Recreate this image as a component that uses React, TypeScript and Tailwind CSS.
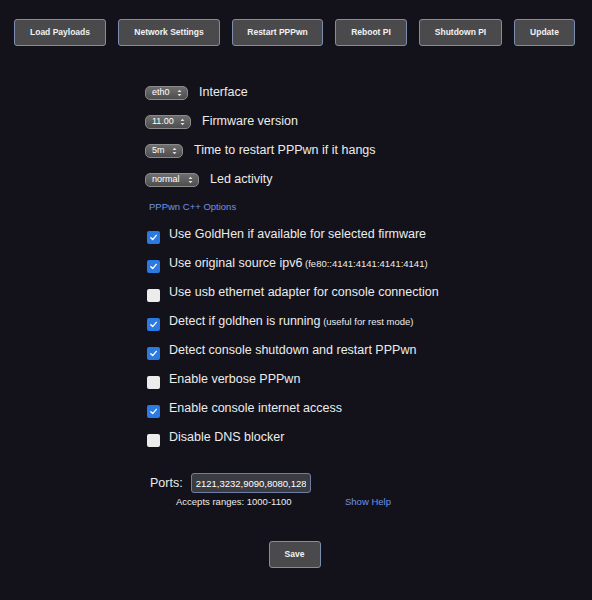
import React from "react";

const navButtons = [
  { label: "Load Payloads", w: "w-[92px]" },
  { label: "Network Settings", w: "w-[102px]" },
  { label: "Restart PPPwn", w: "w-[91px]" },
  { label: "Reboot PI", w: "w-[72px]" },
  { label: "Shutdown PI", w: "w-[83px]" },
  { label: "Update", w: "w-[61px]" },
];

function Select({ value, w }: { value: string; w: string }) {
  return (
    <div
      className={`${w} h-[14px] flex items-center justify-between rounded-[5px] border border-[#8a8a8a] bg-gradient-to-b from-[#6e6e6e] to-[#4e4e4e] pl-[6px] pr-[5px] text-[9px] leading-none text-white shrink-0`}
    >
      <span>{value}</span>
      <svg width="5" height="8" viewBox="0 0 5 8" className="shrink-0">
        <path d="M0.5 3 L2.5 0.8 L4.5 3 Z" fill="#e0e0e0" />
        <path d="M0.5 5 L2.5 7.2 L4.5 5 Z" fill="#e0e0e0" />
      </svg>
    </div>
  );
}

function Check({ checked }: { checked: boolean }) {
  return checked ? (
    <div className="w-[13px] h-[13px] rounded-[2px] bg-[#2a7ae2] flex items-center justify-center shrink-0">
      <svg width="9" height="9" viewBox="0 0 9 9">
        <path d="M1.8 4.8 L3.7 6.6 L7.3 2.4" stroke="white" strokeWidth="1.4" fill="none" strokeLinecap="round" strokeLinejoin="round" />
      </svg>
    </div>
  ) : (
    <div className="w-[13px] h-[13px] rounded-[2px] bg-[#ececec] shrink-0" />
  );
}

const selects = [
  { value: "eth0", w: "w-[43px]", label: "Interface" },
  { value: "11.00", w: "w-[46px]", label: "Firmware version" },
  { value: "5m", w: "w-[38px]", label: "Time to restart PPPwn if it hangs" },
  { value: "normal", w: "w-[54px]", label: "Led activity" },
];

const checks: { checked: boolean; label: string; note?: string }[] = [
  { checked: true, label: "Use GoldHen if available for selected firmware" },
  { checked: true, label: "Use original source ipv6", note: "(fe80::4141:4141:4141:4141)" },
  { checked: false, label: "Use usb ethernet adapter for console connection" },
  { checked: true, label: "Detect if goldhen is running", note: "(useful for rest mode)" },
  { checked: true, label: "Detect console shutdown and restart PPPwn" },
  { checked: false, label: "Enable verbose PPPwn" },
  { checked: true, label: "Enable console internet access" },
  { checked: false, label: "Disable DNS blocker" },
];

export default function App() {
  return (
    <div
      className="min-h-[600px] bg-[#13121a] text-[#ececec]"
      style={{ fontFamily: '"Liberation Sans", Arial, sans-serif' }}
    >
      <div className="flex gap-3 pl-[14px] pt-[19px]">
        {navButtons.map((b) => (
          <button
            key={b.label}
            className={`${b.w} h-[27px] rounded-[3px] border border-[#7d8db0] bg-[#4a4a4c] text-[8.5px] font-bold text-[#f2f2f2]`}
          >
            {b.label}
          </button>
        ))}
      </div>

      <div className="pl-[145px] pt-[32px] flex flex-col">
        {selects.map((s) => (
          <div key={s.label} className="h-[29px] flex items-center gap-[11px]">
            <Select value={s.value} w={s.w} />
            <span className="text-[12.5px]">{s.label}</span>
          </div>
        ))}
        <div className="h-[26px] flex items-center pl-[4px] text-[9.5px] text-[#6f93e6]">PPPwn C++ Options</div>
        <div className="flex flex-col pl-[2px] pt-[3px]">
          {checks.map((c) => (
            <div key={c.label} className="h-[29px] flex items-center gap-[9px]">
              <Check checked={c.checked} />
              <span className="text-[12.5px] pb-[7px]">
                {c.label}
                {c.note && <span className="text-[9.5px]"> {c.note}</span>}
              </span>
            </div>
          ))}
        </div>

        <div className="pt-[18px] pl-[5px] flex items-center gap-[8px] h-[38px]">
          <span className="text-[12.5px]">Ports:</span>
          <input
            readOnly
            value="2121,3232,9090,8080,12800,1337"
            className="w-[120px] h-[20px] rounded-[3px] border border-[#6f7fa3] bg-[#3b3b42] px-[4px] text-[9.5px] text-white outline-none"
            style={{ fontFamily: '"Liberation Sans", Arial, sans-serif' }}
          />
        </div>
        <div className="flex items-center pl-[31px] h-[18px] text-[9.5px]">
          <span className="w-[169px]">Accepts ranges: 1000-1100</span>
          <span className="text-[#6f93e6]">Show Help</span>
        </div>
      </div>

      <div className="flex justify-center pt-[30px] pr-[3px]">
        <button className="w-[52px] h-[27px] rounded-[3px] border border-[#7d8db0] bg-[#4a4a4c] text-[8.5px] font-bold text-[#f2f2f2]">
          Save
        </button>
      </div>
    </div>
  );
}
